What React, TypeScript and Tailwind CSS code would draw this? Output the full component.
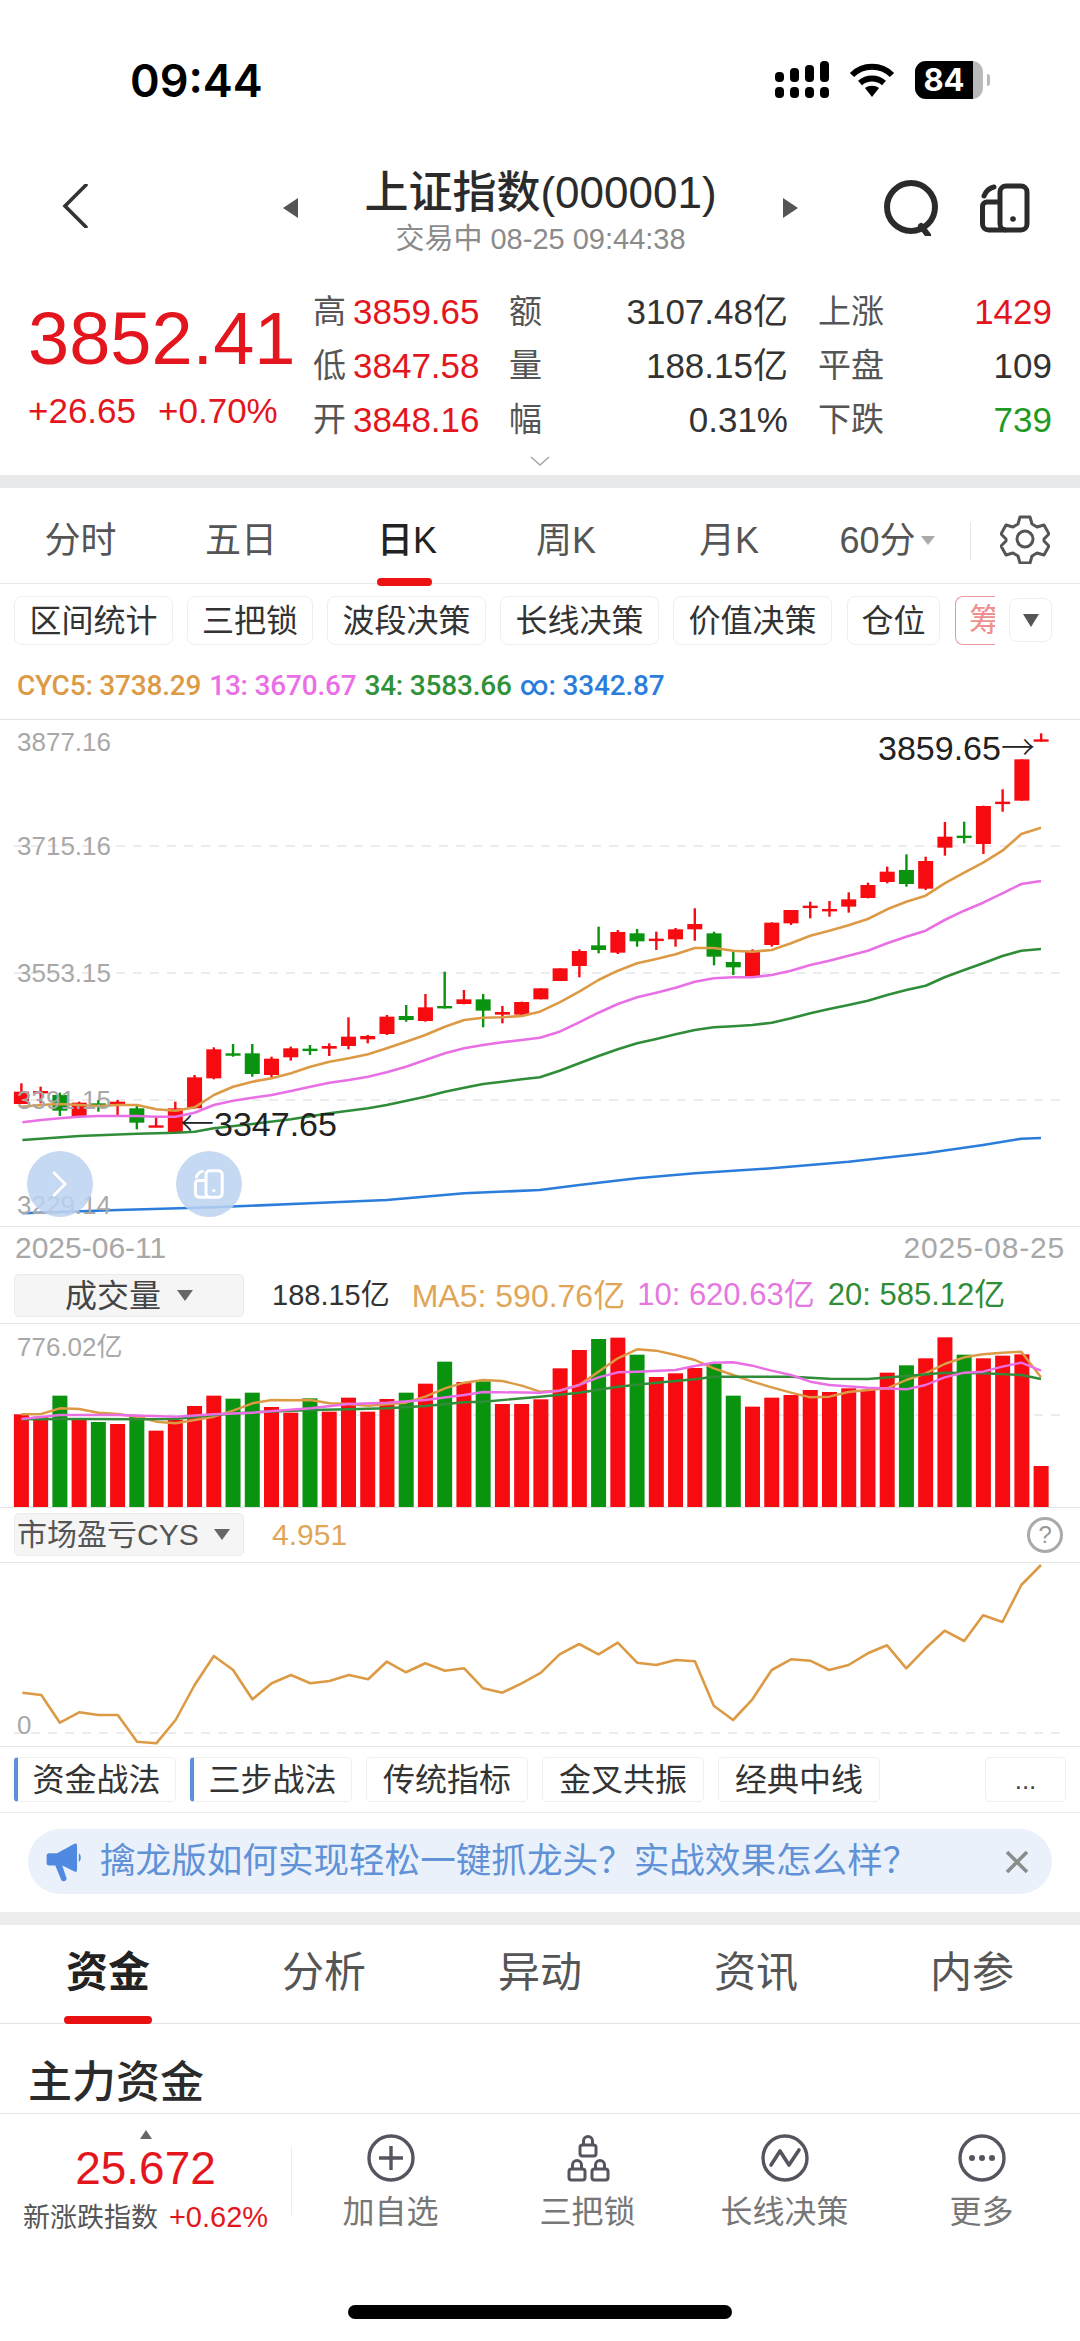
const STEP = 19.24;
const cx = (i: number) => 21.4 + STEP * i;
const RED = "#f60b10";
const GREEN = "#0a930f";
const ORANGE = "#dc9a45";
const PINK = "#e96fe5";
const DKGREEN = "#2f8c38";
const BLUE = "#2b7ddb";

// [wickTop, bodyTop, bodyBottom, wickBottom, up]
const candles: [number, number, number, number, number][] = [
  [1090,1115,1152,1152,1],[1100,1113,1120,1150,1],[1118,1125,1172,1188,0],[1145,1148,1190,1190,1],[1140,1150,1156,1175,0],[1140,1145,1150,1185,1],
  [1152,1165,1208,1228,0],[1190,1216,1221,1221,1],[1145,1165,1236,1238,1],[1065,1072,1165,1165,1],[982,988,1075,1078,1],[972,1000,1006,1010,0],
  [972,1000,1062,1070,0],[1010,1016,1065,1072,1],[980,985,1012,1022,1],[975,986,992,1005,0],[970,978,986,1008,1],[892,950,978,988,1],
  [945,948,958,970,1],[885,890,942,945,1],[855,888,900,905,0],[822,862,903,905,1],[755,858,864,866,0],[810,838,852,853,1],
  [822,838,872,922,0],[858,876,884,910,1],[845,846,884,885,1],[805,805,838,838,1],[745,745,783,783,1],[688,693,738,772,1],
  [620,676,690,700,0],[630,636,698,702,1],[627,640,664,680,0],[635,656,662,690,1],[624,628,658,680,1],[565,612,628,662,1],
  [635,640,710,736,0],[695,726,742,765,0],[688,692,768,770,1],[607,608,675,680,1],[570,570,610,615,1],[545,557,563,595,1],
  [543,567,573,590,1],[517,538,560,578,1],[488,495,534,535,1],[440,455,486,490,1],[403,450,492,500,0],[410,423,506,510,1],
  [306,350,383,407,1],[305,347,353,370,0],[257,258,372,402,1],[208,245,251,275,1],[118,118,242,242,1],[40,58,64,65,1],
];

// zoom x, zoom y pairs, x is in 1/2.904 px
const toPts = (z: number[], oy: number) => {
  const out: string[] = [];
  for (let i = 0; i < z.length; i += 2) out.push(`${(z[i] / 2.904).toFixed(1)},${(z[i + 1] / 3 + oy).toFixed(1)}`);
  return out.join(" ");
};
const R = 1568; // right half of the zoom starts here
const shift = (z: number[]) => z.map((v, i) => (i % 2 === 0 ? v + R : v));

const maOrange = [62,1160,120,1155,174,1152,286,1158,342,1155,398,1155,454,1168,510,1172,565,1162,621,1125,677,1100,733,1085,789,1075,845,1060,901,1040,957,1025,1013,1015,1069,1003,1123,985,1179,965,1235,945,1292,920,1348,900,1403,893,1459,892,1515,888,
  ...shift([0,875,57,847,114,815,170,780,226,752,282,730,338,717,394,703,450,684,505,684,561,692,617,695,673,690,729,670,785,647,840,632,896,616,952,597,1008,568,1064,545,1120,527,1175,490,1232,458,1287,428,1343,392,1398,342,1455,323])];
const maPink = [65,1207,120,1200,174,1195,230,1190,286,1188,342,1188,398,1188,454,1190,510,1190,565,1178,621,1155,677,1142,733,1133,789,1125,845,1113,901,1100,957,1088,1013,1080,1069,1070,1123,1057,1179,1040,1235,1020,1292,1000,1348,985,1403,975,1459,967,1515,960,
  ...shift([0,953,57,935,114,907,170,878,226,852,282,832,338,818,394,803,450,785,505,775,561,772,617,772,673,765,729,752,785,735,840,722,896,707,952,692,1008,670,1064,650,1120,632,1175,600,1232,572,1287,548,1343,520,1398,492,1455,483])];
const maGreen = [65,1260,230,1248,398,1241,510,1238,565,1235,621,1225,733,1212,845,1198,957,1180,1069,1165,1123,1155,1235,1130,1292,1115,1348,1103,1403,1092,1459,1085,1515,1078,
  ...shift([0,1072,57,1052,114,1030,170,1008,226,988,282,970,338,957,394,943,450,930,505,922,561,919,617,915,673,908,729,895,785,880,840,867,896,855,952,842,1008,825,1064,810,1120,797,1175,772,1232,750,1287,730,1343,708,1398,692,1455,687])];
const maBlue = [65,1480,342,1470,620,1462,900,1450,1123,1440,1348,1420,
  ...shift([0,1410,114,1395,282,1375,450,1360,673,1345,896,1325,1120,1300,1287,1275,1398,1256,1455,1254])];

const volumes: [number, number][] = [
  [523,1],[530,1],[467,0],[540,1],[546,0],[552,1],[530,0],[572,1],[540,1],[498,1],[467,1],[476,0],[458,0],[501,1],[518,1],[475,0],[515,1],[473,1],
  [515,1],[477,1],[458,0],[431,1],[365,0],[426,1],[424,0],[492,1],[492,1],[478,1],[385,1],[330,1],[297,0],[293,1],[344,0],[411,1],[400,1],[384,1],
  [372,0],[467,0],[500,1],[473,1],[465,1],[450,1],[456,1],[445,1],[450,1],[398,1],[376,0],[355,1],[292,1],[344,0],[355,1],[347,1],[343,1],[678,1],
];
const volOrange = [62,523,120,522,174,505,230,507,286,518,342,522,398,530,454,545,510,550,565,540,621,530,677,512,733,490,789,480,845,481,901,480,957,490,1013,492,1069,497,1123,493,1179,488,1235,470,1292,445,1348,428,1403,420,1459,423,1515,437,
  ...shift([0,455,57,452,114,435,170,395,226,355,282,328,338,332,394,345,450,360,505,385,561,405,617,425,673,442,729,458,785,472,840,470,896,456,952,450,1008,445,1064,420,1120,400,1175,372,1232,352,1287,343,1343,338,1398,335,1455,412])];
const volPink = [62,537,174,525,342,525,510,530,621,523,733,518,901,505,1013,492,1123,488,1235,480,1348,465,1403,456,
  ...shift([0,458,57,452,114,435,170,412,226,397,282,395,394,390,450,378,505,368,561,367,617,377,673,392,729,405,785,425,840,435,952,443,1064,448,1120,435,1175,412,1232,398,1287,395,1343,380,1398,368,1455,392])];
const volGreen = [62,538,230,537,398,538,510,537,621,525,733,517,901,510,1013,508,1123,505,1235,498,1348,487,1403,485,
  ...shift([0,470,114,458,226,440,338,428,450,418,505,410,617,410,729,410,840,416,952,417,1064,408,1175,398,1287,400,1398,405,1455,417])];
const cys = [65,1358,120,1365,174,1448,230,1417,286,1425,342,1425,398,1505,454,1510,510,1440,565,1335,621,1248,677,1290,733,1378,789,1330,845,1305,901,1330,957,1323,1013,1305,1069,1318,1123,1265,1179,1297,1235,1270,1292,1292,1348,1285,1403,1345,1459,1358,1515,1330,
  ...shift([3,1298,57,1243,114,1212,170,1243,226,1208,282,1268,338,1275,394,1260,450,1264,505,1397,561,1440,617,1378,673,1290,729,1258,785,1262,840,1290,896,1275,952,1240,1008,1216,1064,1285,1120,1225,1175,1172,1232,1203,1287,1126,1343,1146,1398,1035,1455,975])];

function Line({ data, oy, color, w }: { data: number[]; oy: number; color: string; w: number }) {
  return <polyline points={toPts(data, oy)} fill="none" stroke={color} strokeWidth={w} strokeLinejoin="round" />;
}

function PhoneIcon({ color, className }: { color: string; className: string }) {
  return (
    <svg viewBox="0 0 50 50" className={className} fill="none" stroke={color} strokeWidth="5">
      <rect x="20" y="3" width="27" height="44" rx="6" />
      <path d="M20 19H7a4.5 4.5 0 0 0-4.5 4.5V41A6 6 0 0 0 8.5 47H26" />
      <path d="M4 13c2-5 5-8 10-9" strokeLinecap="round" />
      <circle cx="33" cy="36" r="2.8" fill={color} stroke="none" />
    </svg>
  );
}

function StatusBar() {
  return (
    <div className="h-[140px] flex items-center justify-between pl-[130px] pr-[90px] pt-[20px]">
      <div className="font-['Inter',sans-serif] font-semibold text-[45px] leading-none text-black">09:44</div>
      <div className="flex items-center">
        <svg viewBox="0 0 54 38" className="w-[54px] h-[38px]" fill="#000">
          <rect x="0" y="26" width="9" height="11" rx="4" /><rect x="15" y="26" width="9" height="11" rx="4" /><rect x="30" y="26" width="9" height="11" rx="4" /><rect x="45" y="26" width="9" height="11" rx="4" />
          <rect x="0" y="11" width="9" height="10" rx="4" /><rect x="15" y="7" width="9" height="14" rx="4" /><rect x="30" y="4" width="9" height="17" rx="4" /><rect x="45" y="0" width="9" height="21" rx="4" />
        </svg>
        <svg viewBox="0 0 46 36" className="w-[46px] h-[36px] ml-[20px]" fill="none" stroke="#000" strokeWidth="6">
          <path d="M3 13c11-11 29-11 40 0" /><path d="M11 21c7-6 17-6 24 0" />
          <path d="M16 26l7 9 7-9c-4-3-10-3-14 0z" fill="#000" stroke="none" />
        </svg>
        <div className="ml-[20px] w-[68px] h-[38px] rounded-[11px] overflow-hidden flex bg-[#b9b9b9]">
          <div className="w-[58px] bg-black text-white font-['Inter',sans-serif] font-bold text-[31px] leading-[38px] text-center">84</div>
        </div>
        <div className="w-[3px] h-[12px] ml-[4px] rounded-r-full bg-[#b9b9b9]" />
      </div>
    </div>
  );
}

function NavBar() {
  return (
    <div className="h-[135px] flex pt-[20px] relative">
      <div className="w-[283px] pl-[62px] pt-[24px]">
        <svg viewBox="0 0 26 44" className="w-[26px] h-[44px]" fill="none" stroke="#333" strokeWidth="3.6"><path d="M24 1L3 22l21 21" strokeLinecap="round" /></svg>
      </div>
      <div className="pt-[38px]"><div className="w-0 h-0 border-y-[10px] border-y-transparent border-r-[15px] border-r-[#555]" /></div>
      <div className="w-[485px] flex flex-col items-center pt-[3px]">
        <div className="text-[44px] leading-[60px] text-[#2b2b2b] font-medium">上证指数(000001)</div>
        <div className="text-[29px] leading-[36px] text-[#8b8b8b] mt-[-2px]">交易中 08-25 09:44:38</div>
      </div>
      <div className="pt-[38px]"><div className="w-0 h-0 border-y-[10px] border-y-transparent border-l-[15px] border-l-[#555]" /></div>
      <div className="ml-[86px] pt-[20px]">
        <svg viewBox="0 0 56 56" className="w-[56px] h-[56px]" fill="none" stroke="#2b2b2b" strokeWidth="6"><circle cx="27" cy="27" r="24" /><path d="M37 46l7 9" strokeLinecap="round" /></svg>
      </div>
      <div className="ml-[40px] pt-[23px]"><PhoneIcon color="#2b2b2b" className="w-[50px] h-[50px]" /></div>
    </div>
  );
}

const qCell = "text-[35px] leading-[54px]";
const qLabel = "text-[33px] leading-[54px] text-[#555]";

function Quote() {
  return (
    <div className="h-[200px] pt-[10px]">
      <div className="flex">
        <div className="w-[313px] pl-[28px] text-[#e3161e]">
          <div className="text-[74px] leading-[108px]">3852.41</div>
          <div className="flex gap-[22px] text-[35px] leading-[36px]"><span>+26.65</span><span>+0.70%</span></div>
        </div>
        <div className="grid grid-cols-[40px_156px_51px_228px_142px_122px]">
          <div className={qLabel}>高</div><div className={`${qCell} text-[#e3161e]`}>3859.65</div><div className={qLabel}>额</div>
          <div className={`${qCell} text-[#333] text-right`}>3107.48亿</div><div className={`${qLabel} pl-[30px]`}>上涨</div><div className={`${qCell} text-[#e3161e] text-right`}>1429</div>
          <div className={qLabel}>低</div><div className={`${qCell} text-[#e3161e]`}>3847.58</div><div className={qLabel}>量</div>
          <div className={`${qCell} text-[#333] text-right`}>188.15亿</div><div className={`${qLabel} pl-[30px]`}>平盘</div><div className={`${qCell} text-[#333] text-right`}>109</div>
          <div className={qLabel}>开</div><div className={`${qCell} text-[#e3161e]`}>3848.16</div><div className={qLabel}>幅</div>
          <div className={`${qCell} text-[#333] text-right`}>0.31%</div><div className={`${qLabel} pl-[30px]`}>下跌</div><div className={`${qCell} text-[#1f9a25] text-right`}>739</div>
        </div>
      </div>
      <div className="flex justify-center mt-[9px]">
        <svg viewBox="0 0 20 10" className="w-[20px] h-[10px]" fill="none" stroke="#aaa" strokeWidth="1.6"><path d="M1 1l9 8 9-8" /></svg>
      </div>
    </div>
  );
}

function PeriodTabs() {
  const tabs: [string, string][] = [["分时", "w-[161px]"], ["五日", "w-[160px]"], ["日K", "w-[172px]"], ["周K", "w-[146px]"], ["月K", "w-[180px]"]];
  return (
    <div className="h-[96px] flex items-center border-b border-[#e9e9e9] text-[36px] text-[#555] pt-[10px]">
      {tabs.map(([t, w], i) => (
        <div key={t} className={`${w} relative h-full flex items-center justify-center ${i === 2 ? "text-[#222] font-medium" : ""}`}>
          {t}
          {i === 2 && <span className="absolute bottom-[-3px] left-[56px] w-[55px] h-[8px] rounded-full bg-[#ee1111]" />}
        </div>
      ))}
      <div className="w-[136px] flex items-center justify-center gap-[5px]">
        <span className="text-[36px]">60分</span>
        <span className="w-0 h-0 border-x-[7px] border-x-transparent border-t-[9px] border-t-[#aaa]" />
      </div>
      <div className="w-px h-[38px] bg-[#e6e6e6] ml-[15px]" />
      <svg viewBox="0 0 50 50" className="w-[50px] h-[50px] ml-[29px] mt-[-4px]" fill="none" stroke="#555" strokeWidth="3">
        <path d="M20 3h10l2 7 5 3 7-2 5 9-5 5v2l5 5-5 9-7-2-5 3-2 7H20l-2-7-5-3-7 2-5-9 5-5v-2L1 20l5-9 7 2 5-3z" strokeLinejoin="round" />
        <circle cx="25" cy="25" r="8" />
      </svg>
    </div>
  );
}

const topChip = "h-[49px] flex items-center justify-center rounded-[8px] border border-[#eeeeee] text-[32px] leading-none text-[#333]";

function ChipRow() {
  return (
    <div className="h-[61px] flex pl-[14px] pt-[12px]">
      <div className={`${topChip} w-[159px]`}>区间统计</div>
      <div className={`${topChip} w-[126px] ml-[14px]`}>三把锁</div>
      <div className={`${topChip} w-[159px] ml-[14px]`}>波段决策</div>
      <div className={`${topChip} w-[159px] ml-[14px]`}>长线决策</div>
      <div className={`${topChip} w-[159px] ml-[14px]`}>价值决策</div>
      <div className={`${topChip} w-[93px] ml-[15px]`}>仓位</div>
      <div className="w-[40px] h-[49px] ml-[15px] rounded-l-[8px] border border-r-0 border-[#e89a9a] text-[32px] leading-[47px] text-[#ef8f8f] pl-[13px] overflow-hidden whitespace-nowrap">筹</div>
      <div className="w-[43px] h-[44px] ml-[14px] mt-[2px] rounded-[8px] border border-[#eeeeee] flex items-center justify-center">
        <span className="w-0 h-0 border-x-[8px] border-x-transparent border-t-[13px] border-t-[#555]" />
      </div>
    </div>
  );
}

function Legend() {
  return (
    <div className="h-[75px] flex items-center border-b border-[#e4e4e4] pl-[17px] pt-[8px] text-[28px] gap-[8px] tracking-[-0.2px] font-medium font-['Roboto','Noto_Sans_CJK_SC',sans-serif]">
      <span className="text-[#dc9a45]">CYC5: 3738.29</span>
      <span className="text-[#ea6fe6]">13: 3670.67</span>
      <span className="text-[#2f9138]">34: 3583.66</span>
      <span className="text-[#2b7ddb]">∞: 3342.87</span>
    </div>
  );
}

const axisLabel = "absolute left-[17px] text-[26px] leading-[30px] text-[#a8a8a8]";
const arrow = "font-['Noto_Sans_CJK_SC',sans-serif] font-light";

function KChart() {
  return (
    <div className="relative h-[507px] border-b border-[#e4e4e4]">
      <svg viewBox="0 0 1080 506" className="block w-[1080px] h-[506px]">
        {[126, 253, 380].map((y) => <line key={y} x1="14" x2="1068" y1={y} y2={y} stroke="#e6e6e6" strokeWidth="1.5" strokeDasharray="9 8" />)}
        {candles.map(([wt, bt, bb, wb, up], i) => (
          <g key={i} fill={up ? RED : GREEN}>
            <rect x={cx(i) - 1.2} y={wt / 3} width="2.4" height={(wb - wt) / 3} />
            <rect x={cx(i) - 7.5} y={bt / 3} width="15" height={Math.max((bb - bt) / 3, 2.4)} />
          </g>
        ))}
        <Line data={maOrange} oy={0} color={ORANGE} w={2.6} />
        <Line data={maPink} oy={0} color={PINK} w={2.6} />
        <Line data={maGreen} oy={0} color={DKGREEN} w={2.6} />
        <Line data={maBlue} oy={0} color={BLUE} w={2.6} />
      </svg>
      <div className={`${axisLabel} top-[7px]`}>3877.16</div>
      <div className={`${axisLabel} top-[111px]`}>3715.16</div>
      <div className={`${axisLabel} top-[238px]`}>3553.15</div>
      <div className={`${axisLabel} top-[365px]`}>3391.15</div>
      <div className={`${axisLabel} top-[470px]`}>3229.14</div>
      <div className="absolute left-[180px] top-[382px] text-[34px] leading-[40px] text-[#222]"><span className={arrow}>←</span>3347.65</div>
      <div className="absolute left-[878px] top-[6px] text-[34px] leading-[40px] text-[#222]">3859.65<span className={arrow}>→</span></div>
      <div className="absolute left-[27px] top-[431px] w-[66px] h-[66px] rounded-full bg-[#bcd2f1]/85 flex items-center justify-center">
        <svg viewBox="0 0 24 36" className="w-[18px] h-[30px]" fill="none" stroke="#fff" strokeWidth="3.5"><path d="M3 2l16 16L3 34" /></svg>
      </div>
      <div className="absolute left-[176px] top-[431px] w-[66px] h-[66px] rounded-full bg-[#bcd2f1]/85 flex items-center justify-center">
        <PhoneIcon color="#fff" className="w-[30px] h-[30px]" />
      </div>
    </div>
  );
}

function DateRow() {
  return (
    <div className="h-[41px] flex items-center justify-between pl-[15px] pr-[15px] text-[30px] text-[#a8a8a8]">
      <span>2025-06-11</span><span className="tracking-[0.8px]">2025-08-25</span>
    </div>
  );
}

function VolHead() {
  return (
    <div className="h-[56px] flex items-start pl-[14px] pt-[6px] border-b border-[#e4e4e4] text-[31px]">
      <div className="w-[230px] h-[43px] rounded-[5px] border border-[#ebebeb] bg-[#f5f5f5] flex items-center justify-center gap-[16px] text-[32px] text-[#444]">
        成交量<span className="w-0 h-0 border-x-[8px] border-x-transparent border-t-[11px] border-t-[#666]" />
      </div>
      <div className="flex items-center h-[43px] ml-[28px] text-[29px] text-[#333]">188.15亿</div>
      <div className="flex items-center h-[43px] ml-[22px] text-[32px] text-[#dfa658]">MA5: 590.76亿</div>
      <div className="flex items-center h-[43px] ml-[12px] text-[#e578e0]">10: 620.63亿</div>
      <div className="flex items-center h-[43px] ml-[13px] text-[#2f8c38]">20: 585.12亿</div>
    </div>
  );
}

function VolChart() {
  const oy = 1240 - 1324;
  return (
    <div className="relative h-[184px] border-b border-[#e4e4e4]">
      <svg viewBox="0 0 1080 183" className="block w-[1080px] h-[183px]">
        <line x1="14" x2="1068" y1="91" y2="91" stroke="#e6e6e6" strokeWidth="1.5" strokeDasharray="9 8" />
        {volumes.map(([top, up], i) => (
          <rect key={i} x={cx(i) - 7.5} y={top / 3 + oy} width="15" height={(802 - top) / 3} fill={up ? RED : GREEN} />
        ))}
        <Line data={volOrange} oy={oy} color={ORANGE} w={2.4} />
        <Line data={volGreen} oy={oy} color={DKGREEN} w={2.4} />
        <Line data={volPink} oy={oy} color={PINK} w={2.4} />
      </svg>
      <div className="absolute left-[17px] top-[8px] text-[26px] leading-[30px] text-[#a8a8a8]">776.02亿</div>
    </div>
  );
}

function CysHead() {
  return (
    <div className="h-[55px] flex items-start pl-[14px] pt-[5px] border-b border-[#e4e4e4]">
      <div className="w-[230px] h-[43px] rounded-[5px] border border-[#ebebeb] bg-[#f5f5f5] flex items-center pl-[2px] text-[30px] text-[#555]">
        市场盈亏CYS<span className="ml-[15px] w-0 h-0 border-x-[8px] border-x-transparent border-t-[11px] border-t-[#666]" />
      </div>
      <div className="h-[43px] flex items-center ml-[28px] text-[30px] text-[#dfa658]">4.951</div>
      <div className="ml-[680px] w-[36px] h-[36px] mt-[4px] rounded-full border-[3px] border-[#aaa] text-[24px] leading-[30px] text-[#999] text-center">?</div>
    </div>
  );
}

function CysChart() {
  const oy = 1240 - 1563;
  return (
    <div className="relative h-[184px] border-b border-[#e4e4e4]">
      <svg viewBox="0 0 1080 183" className="block w-[1080px] h-[183px]">
        <line x1="14" x2="1068" y1="170" y2="170" stroke="#e6e6e6" strokeWidth="1.5" strokeDasharray="9 8" />
        <Line data={cys} oy={oy} color={ORANGE} w={2.6} />
      </svg>
      <div className="absolute left-[17px] top-[147px] text-[26px] leading-[30px] text-[#a8a8a8]">0</div>
    </div>
  );
}

function StrategyRow() {
  const base = "w-[162px] h-[45px] rounded-[5px] border border-[#efefef] flex items-center justify-center text-[32px] text-[#333]";
  return (
    <div className="h-[66px] flex pl-[14px] pt-[10px] border-b border-[#ececec]">
      <div className={`${base} border-l-[4px] border-l-[#5b8fd9] rounded-l-[4px]`}>资金战法</div>
      <div className={`${base} border-l-[4px] border-l-[#5b8fd9] rounded-l-[4px] ml-[14px]`}>三步战法</div>
      <div className={`${base} ml-[14px]`}>传统指标</div>
      <div className={`${base} ml-[14px]`}>金叉共振</div>
      <div className={`${base} ml-[14px]`}>经典中线</div>
      <div className="w-[81px] h-[45px] ml-[105px] rounded-[5px] border border-[#efefef] text-[26px] leading-[44px] text-center text-[#444]">...</div>
    </div>
  );
}

function Banner() {
  return (
    <div className="h-[99px] px-[28px] pt-[16px]">
      <div className="h-[65px] rounded-full bg-[#eaf1fb] flex items-center pl-[17px]">
        <svg viewBox="0 0 40 46" className="w-[38px] h-[40px]" fill="#4f8ae0">
          <path d="M3 13h9L32 2c2-1 3 0 3 2v28c0 2-1 3-3 2L18 27l5 15c0 3-4 4-6 2L10 27H3c-2 0-3-1-3-3V16c0-2 1-3 3-3z" />
          <path d="M37 13c3 2 3 8 0 10z" />
        </svg>
        <div className="ml-[17px] w-[885px] text-[35.6px] leading-none text-[#6191d6] whitespace-nowrap">擒龙版如何实现轻松一键抓龙头？实战效果怎么样？</div>
        <svg viewBox="0 0 24 24" className="w-[24px] h-[24px] ml-[20px]" fill="none" stroke="#8c8c8c" strokeWidth="3.6"><path d="M2 2l20 20M22 2L2 22" /></svg>
      </div>
    </div>
  );
}

function BottomTabs() {
  const tabs = ["资金", "分析", "异动", "资讯", "内参"];
  return (
    <div className="h-[99px] flex border-b border-[#e4e4e4]">
      {tabs.map((t, i) => (
        <div key={t} className={`w-[216px] relative flex justify-center pt-[22px] text-[42px] leading-[52px] ${i === 0 ? "text-[#222] font-bold" : "text-[#555]"}`}>
          {t}
          {i === 0 && <span className="absolute bottom-[-1px] left-[64px] w-[88px] h-[8px] rounded-full bg-[#e81010]" />}
        </div>
      ))}
    </div>
  );
}

function BottomBar() {
  const items = ["加自选", "三把锁", "长线决策", "更多"];
  const stroke = "#55555f";
  const icons = [
    <svg key="a" viewBox="0 0 48 48" className="w-[48px] h-[48px]" fill="none" stroke={stroke} strokeWidth="3.4"><circle cx="24" cy="24" r="22" /><path d="M24 12v24M12 24h24" /></svg>,
    <svg key="b" viewBox="0 0 48 48" className="w-[48px] h-[48px]" fill="none" stroke={stroke} strokeWidth="3">
      <rect x="16" y="11" width="16" height="11" rx="2.5" /><path d="M19.5 11V7a4.5 4.5 0 0 1 9 0v4" />
      <rect x="5" y="35" width="16" height="11" rx="2.5" /><path d="M8.5 35v-4a4.5 4.5 0 0 1 9 0v4" />
      <rect x="28" y="35" width="16" height="11" rx="2.5" /><path d="M31.5 35v-4a4.5 4.5 0 0 1 9 0v4" />
    </svg>,
    <svg key="c" viewBox="0 0 48 48" className="w-[48px] h-[48px]" fill="none" stroke={stroke} strokeWidth="3.4"><circle cx="24" cy="24" r="22" /><path d="M10 31l9-14 9 14 10-15" strokeLinejoin="round" strokeLinecap="round" strokeWidth="3.6" /></svg>,
    <svg key="d" viewBox="0 0 48 48" className="w-[48px] h-[48px]" fill="none" stroke={stroke} strokeWidth="3.4"><circle cx="24" cy="24" r="22" /><circle cx="14" cy="24" r="3" fill={stroke} stroke="none" /><circle cx="24" cy="24" r="3" fill={stroke} stroke="none" /><circle cx="34" cy="24" r="3" fill={stroke} stroke="none" /></svg>,
  ];
  return (
    <div>
      <div className="flex h-[130px]">
        <div className="w-[291px] flex flex-col items-center pt-[16px]">
          <span className="w-0 h-0 border-x-[6px] border-x-transparent border-b-[9px] border-b-[#666]" />
          <div className="text-[46px] leading-[50px] text-[#e3161e] mt-[4px]">25.672</div>
          <div className="flex items-baseline gap-[11px] mt-[9px] leading-[30px]">
            <span className="text-[27px] text-[#555]">新涨跌指数</span>
            <span className="text-[29px] text-[#e3161e]">+0.62%</span>
          </div>
        </div>
        <div className="w-px h-[68px] mt-[33px] bg-[#ececec]" />
        {items.map((t, i) => (
          <div key={t} className="w-[197px] flex flex-col items-center pt-[20px]">
            {icons[i]}
            <div className="text-[32px] leading-[40px] text-[#777] mt-[10px]">{t}</div>
          </div>
        ))}
      </div>
      <div className="mt-[61px] mx-auto w-[384px] h-[14px] rounded-full bg-black" />
    </div>
  );
}

export default function App() {
  return (
    <div className="w-[1080px] h-[2341px] overflow-hidden bg-white font-['Liberation_Sans','Noto_Sans_CJK_SC',sans-serif]">
      <StatusBar />
      <NavBar />
      <Quote />
      <div className="h-[13px] bg-[#e8e9eb]" />
      <PeriodTabs />
      <ChipRow />
      <Legend />
      <KChart />
      <DateRow />
      <VolHead />
      <VolChart />
      <CysHead />
      <CysChart />
      <StrategyRow />
      <Banner />
      <div className="h-[13px] bg-[#ededed]" />
      <BottomTabs />
      <div className="h-[90px] flex items-center pl-[28px] pt-[28px] border-b border-[#e4e4e4] text-[44px] font-medium text-[#2b2b2b]">主力资金</div>
      <BottomBar />
    </div>
  );
}
